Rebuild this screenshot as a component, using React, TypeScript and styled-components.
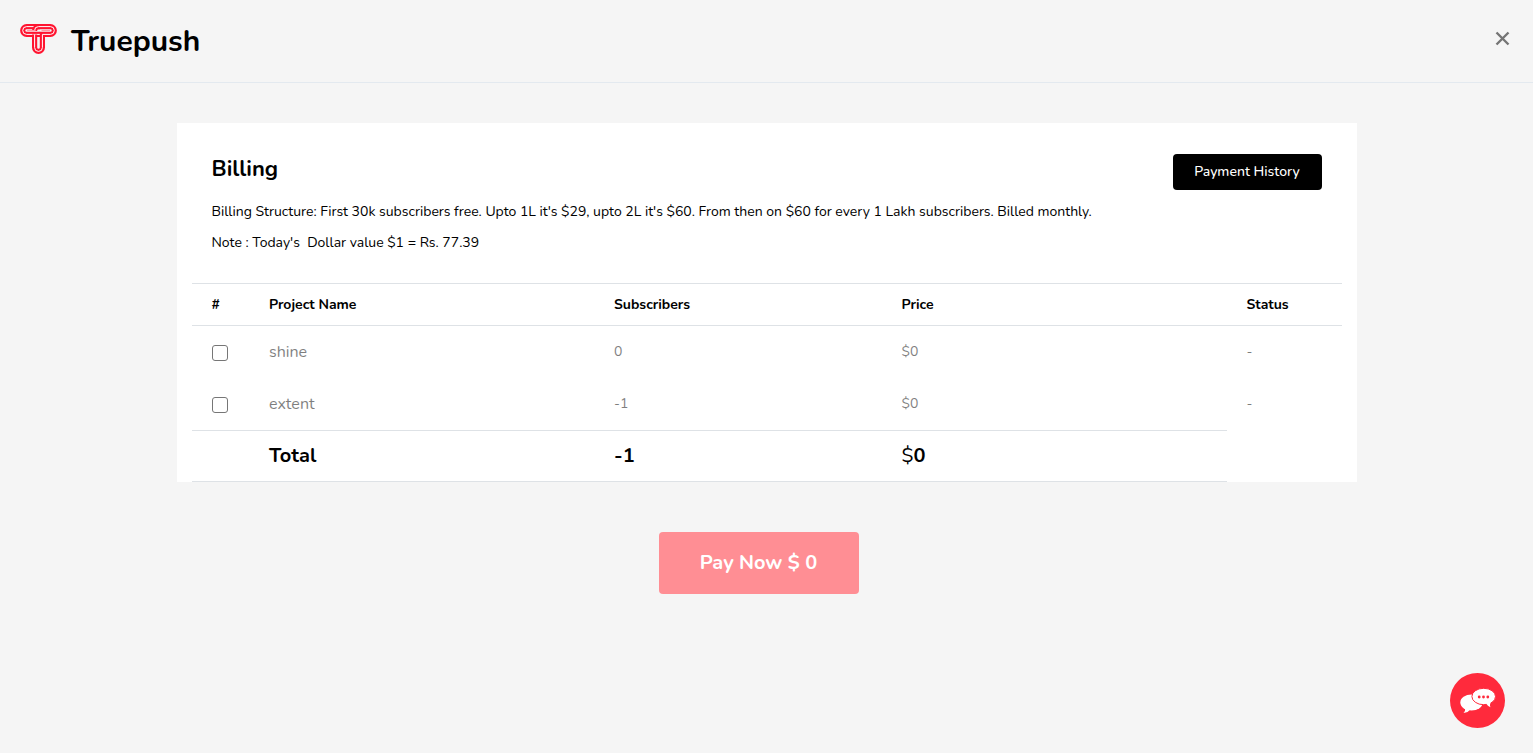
import React from "react";
import styled, { createGlobalStyle, css } from "styled-components";

const GlobalStyle = createGlobalStyle`
  *, *::before, *::after { box-sizing: border-box; }
  body {
    margin: 0;
    background: #f5f5f5;
    color: #000;
    font-family: Nunito, Lato, sans-serif;
    font-size: 14px;
    line-height: 1.5;
  }
`;

const Header = styled.header`
  display: flex;
  align-items: center;
  justify-content: space-between;
  height: 83px;
  padding: 2px 20px 0;
  border-bottom: 1px solid #e3e9ef;
`;

const Brand = styled.a`
  display: flex;
  align-items: center;
  gap: 14px;
  color: #000;
  font-size: 30px;
  font-weight: 700;
  line-height: 40px;
  text-decoration: none;
`;

const LogoMark = styled.svg`
  display: block;
  width: 37px;
  height: 30px;
  margin-bottom: 6px;
`;

const CloseButton = styled.button`
  display: flex;
  padding: 3px;
  margin-bottom: 7px;
  border: 0;
  background: none;
  color: #757575;
  cursor: pointer;
`;

const Main = styled.main`
  display: flex;
  flex-direction: column;
  align-items: center;
  padding: 40px 15px;
`;

const Card = styled.section`
  width: 100%;
  max-width: 1180px;
  padding: 0 15px;
  background: #fff;
`;

const Intro = styled.div`
  display: flex;
  align-items: flex-start;
  justify-content: space-between;
  gap: 20px;
  padding: 31px 20px 25px;
`;

const Title = styled.h1`
  margin: 0 0 12px;
  font-size: 22px;
  font-weight: 700;
  line-height: 30px;
`;

const Note = styled.p`
  margin: 0;
  font-size: 14px;
  line-height: 31px;
  white-space: pre-wrap;
`;

const HistoryButton = styled.button`
  flex: none;
  width: 149px;
  height: 36px;
  padding: 0 0 2px;
  border: 0;
  border-radius: 4px;
  background: #000;
  color: #fff;
  font: inherit;
  font-weight: 500;
  cursor: pointer;
`;

const Table = styled.table`
  width: 100%;
  table-layout: fixed;
  border-collapse: separate;
  border-spacing: 0;
`;

const rule = css`
  border-top: 1px solid #dee2e6;
  border-bottom: 1px solid #dee2e6;
`;

const HeadCell = styled.th<{ $width: string }>`
  width: ${(p) => p.$width};
  height: 43px;
  padding: 0 20px;
  ${rule}
  font-size: 14px;
  font-weight: 700;
  text-align: left;
`;

const Cell = styled.td<{ $name?: boolean }>`
  height: 52px;
  padding: 0 20px;
  font-size: ${(p) => (p.$name ? 16 : 14)}px;
  line-height: ${(p) => (p.$name ? 24 : 22)}px;
`;

const Muted = styled.div`
  opacity: 0.5;
`;

const TotalCell = styled.td`
  height: 52px;
  padding: 0 20px;
  ${rule}
  font-size: 20px;
  font-weight: 700;
`;

const Currency = styled.span`
  font-weight: 400;
`;

const Checkbox = styled.input`
  display: block;
  width: 16px;
  height: 16px;
  margin: 2px 0 0;
  appearance: none;
  border: 1px solid #767676;
  border-radius: 3px;
  background: #fff;
  &:checked { background: #ff2a3c; }
`;

const PayButton = styled.button`
  width: 200px;
  height: 62px;
  margin: 50px 16px 0 0;
  padding: 0;
  border: 0;
  border-radius: 4px;
  background: #ff8e94;
  color: #fff;
  font: inherit;
  font-size: 20px;
  font-weight: 700;
`;

const ChatButton = styled.button`
  position: fixed;
  right: 28px;
  bottom: 25px;
  display: block;
  width: 55px;
  height: 55px;
  padding: 0;
  border: 0;
  border-radius: 50%;
  background: #ff2a3c;
  cursor: pointer;
`;

const columns = [
  { label: "#", width: "5%" },
  { label: "Project Name", width: "30%" },
  { label: "Subscribers", width: "25%" },
  { label: "Price", width: "30%" },
  { label: "Status", width: "10%" },
];

const projects = [
  { name: "shine", subscribers: 0, price: "$0", status: "-" },
  { name: "extent", subscribers: -1, price: "$0", status: "-" },
];

const leftLoop = "M20 10.4H6.6a3.9 3.9 0 0 1 0-7.800H20";
const rightLoop =
  "M14.600 7V6.500a3.900 3.900 0 0 1 3.900-3.900H30.400a3.900 3.900 0 0 1 0 7.800H22.400V23.500a3.900 3.900 0 0 1-7.800 0V10.400";

const Band = ({ d }: { d: string }) => (
  <>
    <path d={d} stroke="#ff1430" strokeWidth="5.2" />
    <path d={d} stroke="#fff" strokeWidth="1" />
  </>
);

export default function App() {
  return (
    <>
      <GlobalStyle />
      <Header>
        <Brand href="#">
          <LogoMark viewBox="0 0 37 30" fill="none" aria-hidden="true">
            <Band d={leftLoop} />
            <Band d={rightLoop} />
            <path d="M7 6.5H15.5M21.5 6.5H30" stroke="#ff9aa6" strokeWidth="1.2" />
          </LogoMark>
          Truepush
        </Brand>
        <CloseButton aria-label="Close">
          <svg width="15" height="15" viewBox="0 0 15 15" stroke="currentColor" strokeWidth="2.4">
            <path d="M1.5 1.5l12 12M13.5 1.5l-12 12" />
          </svg>
        </CloseButton>
      </Header>
      <Main>
        <Card>
          <Intro>
            <div>
              <Title>Billing</Title>
              <Note>
                Billing Structure: First 30k subscribers free. Upto 1L it's $29, upto 2L it's $60. From then on $60 for every 1 Lakh subscribers. Billed monthly.
              </Note>
              <Note>{"Note : Today's  Dollar value $1 = Rs. 77.39"}</Note>
            </div>
            <HistoryButton>Payment History</HistoryButton>
          </Intro>
          <Table>
            <thead>
              <tr>
                {columns.map((c) => (
                  <HeadCell key={c.label} $width={c.width}>{c.label}</HeadCell>
                ))}
              </tr>
            </thead>
            <tbody>
              {projects.map((p) => (
                <tr key={p.name}>
                  <Cell><Checkbox type="checkbox" aria-label={p.name} /></Cell>
                  <Cell $name><Muted>{p.name}</Muted></Cell>
                  <Cell><Muted>{p.subscribers}</Muted></Cell>
                  <Cell><Muted>{p.price}</Muted></Cell>
                  <Cell><Muted>{p.status}</Muted></Cell>
                </tr>
              ))}
            </tbody>
            <tfoot>
              <tr>
                <TotalCell />
                <TotalCell>Total</TotalCell>
                <TotalCell>-1</TotalCell>
                <TotalCell><Currency>$</Currency>0</TotalCell>
              </tr>
            </tfoot>
          </Table>
        </Card>
        <PayButton>Pay Now $ 0</PayButton>
      </Main>
      <ChatButton aria-label="Chat">
        <svg width="55" height="55" viewBox="0 0 55 55" fill="#fff">
          <ellipse cx="21.5" cy="29.5" rx="11.2" ry="8" />
          <path d="M14.5 34.5c1.2 2.5 .5 4-1 5.5 3-.3 5.5-1.5 6.5-3.5z" />
          <ellipse cx="33.7" cy="23.5" rx="11.8" ry="8.2" stroke="#ff2a3c" />
          <path d="M36 30c1.2 2.2 2.5 3.5 4.5 4.2-.8-1.7-.7-3.2 .5-5.2z" />
          <g fill="#ff2a3c">
            <circle cx="29.2" cy="24" r="1.4" />
            <circle cx="33.5" cy="24" r="1.4" />
            <circle cx="37.8" cy="24" r="1.4" />
          </g>
        </svg>
      </ChatButton>
    </>
  );
}
